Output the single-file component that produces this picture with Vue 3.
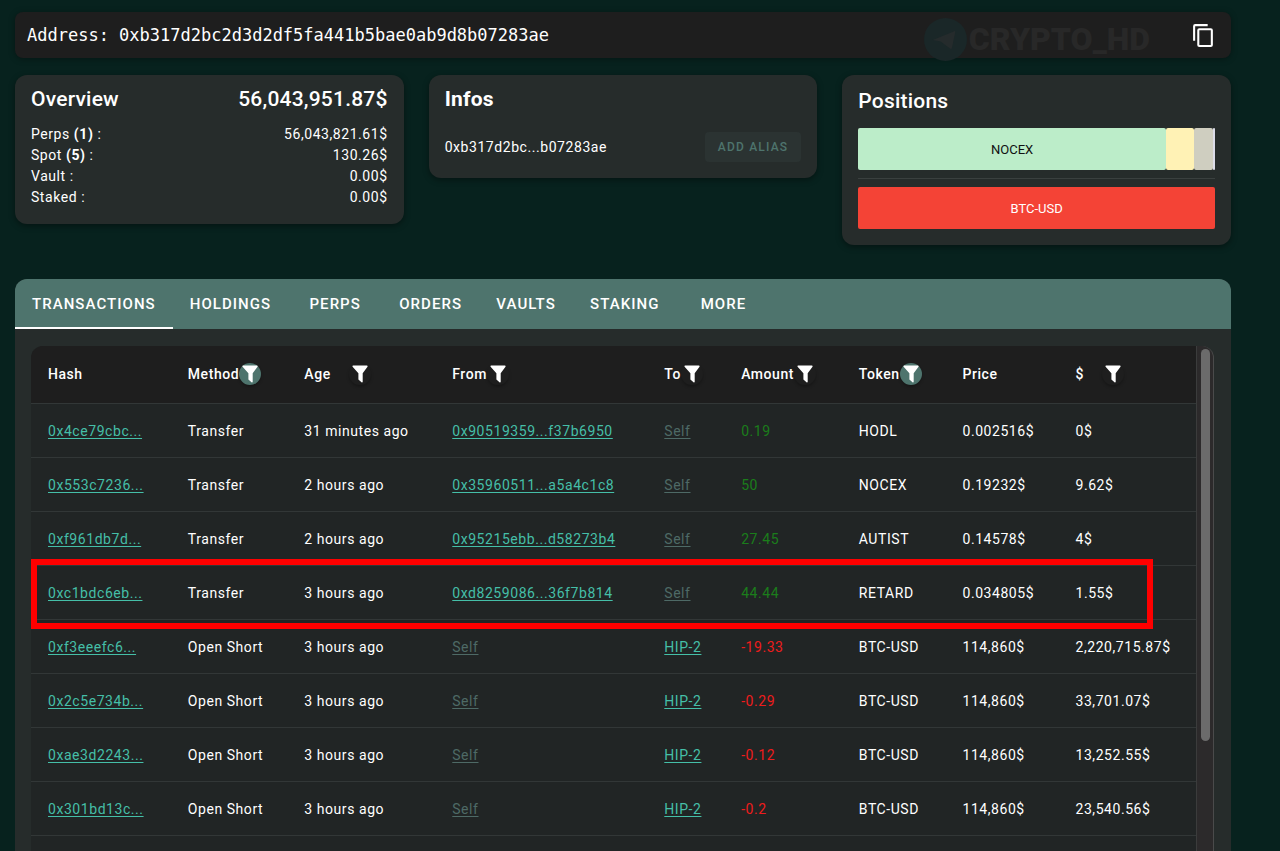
<script setup>
import { ref } from 'vue'

const tabs = ['Transactions', 'Holdings', 'Perps', 'Orders', 'Vaults', 'Staking', 'More']
const activeTab = ref('Transactions')

const balances = [
  { name: 'Perps', count: '(1)', value: '56,043,821.61$' },
  { name: 'Spot', count: '(5)', value: '130.26$' },
  { name: 'Vault', count: '', value: '0.00$' },
  { name: 'Staked', count: '', value: '0.00$' },
]

const columns = [
  { key: 'hash', label: 'Hash' },
  { key: 'method', label: 'Method', filter: true, active: true },
  { key: 'age', label: 'Age', filter: true, wide: true },
  { key: 'from', label: 'From', filter: true },
  { key: 'to', label: 'To', filter: true },
  { key: 'amount', label: 'Amount', filter: true },
  { key: 'token', label: 'Token', filter: true, active: true },
  { key: 'price', label: 'Price' },
  { key: 'total', label: '$', filter: true, wide: true },
]

const rows = [
  { hash: '0x4ce79cbc...', method: 'Transfer', age: '31 minutes ago', from: '0x90519359...f37b6950', to: 'Self', amount: '0.19', token: 'HODL', price: '0.002516$', total: '0$' },
  { hash: '0x553c7236...', method: 'Transfer', age: '2 hours ago', from: '0x35960511...a5a4c1c8', to: 'Self', amount: '50', token: 'NOCEX', price: '0.19232$', total: '9.62$' },
  { hash: '0xf961db7d...', method: 'Transfer', age: '2 hours ago', from: '0x95215ebb...d58273b4', to: 'Self', amount: '27.45', token: 'AUTIST', price: '0.14578$', total: '4$' },
  { hash: '0xc1bdc6eb...', method: 'Transfer', age: '3 hours ago', from: '0xd8259086...36f7b814', to: 'Self', amount: '44.44', token: 'RETARD', price: '0.034805$', total: '1.55$', marked: true },
  { hash: '0xf3eeefc6...', method: 'Open Short', age: '3 hours ago', from: 'Self', to: 'HIP-2', amount: '-19.33', token: 'BTC-USD', price: '114,860$', total: '2,220,715.87$' },
  { hash: '0x2c5e734b...', method: 'Open Short', age: '3 hours ago', from: 'Self', to: 'HIP-2', amount: '-0.29', token: 'BTC-USD', price: '114,860$', total: '33,701.07$' },
  { hash: '0xae3d2243...', method: 'Open Short', age: '3 hours ago', from: 'Self', to: 'HIP-2', amount: '-0.12', token: 'BTC-USD', price: '114,860$', total: '13,252.55$' },
  { hash: '0x301bd13c...', method: 'Open Short', age: '3 hours ago', from: 'Self', to: 'HIP-2', amount: '-0.2', token: 'BTC-USD', price: '114,860$', total: '23,540.56$' },
]

const linkKeys = ['hash', 'from', 'to']
</script>

<template>
  <main class="page">
    <header class="address">
      <span class="address-text">Address: 0xb317d2bc2d3d2df5fa441b5bae0ab9d8b07283ae</span>
      <span class="brand">
        <svg class="brand-icon" viewBox="0 0 44 44" aria-hidden="true">
          <circle cx="22" cy="22" r="22" fill="#1a2728" />
          <path d="M9 22.5 L31 13.5 Q32 13 32 14.5 L28.500 31 Q28 32 27 31.500 L17 24 Z" fill="#252b2c" />
        </svg>
        <span class="brand-name">CRYPTO_HD</span>
      </span>
      <button class="copy" type="button" aria-label="Copy address">
        <svg viewBox="0 0 24 24" aria-hidden="true">
          <path fill="#fff" d="M19,21H8V7H19M19,5H8A2,2 0 0,0 6,7V21A2,2 0 0,0 8,23H19A2,2 0 0,0 21,21V7A2,2 0 0,0 19,5M16,1H4A2,2 0 0,0 2,3V17H4V3H16V1Z" />
        </svg>
      </button>
    </header>

    <section class="cards">
      <article class="card">
        <div class="card-head">
          <h2>Overview</h2>
          <h2>56,043,951.87$</h2>
        </div>
        <dl class="balances">
          <div v-for="b in balances" :key="b.name">
            <dt>{{ b.name }} <b v-if="b.count">{{ b.count }}</b> :</dt>
            <dd>{{ b.value }}</dd>
          </div>
        </dl>
      </article>

      <article class="card">
        <h2 class="bold">Infos</h2>
        <div class="alias">
          <span>0xb317d2bc...b07283ae</span>
          <button type="button">ADD ALIAS</button>
        </div>
      </article>

      <article class="card positions">
        <h2>Positions</h2>
        <div class="bar">
          <span class="seg mint">NOCEX</span>
          <span class="seg cream"></span>
          <span class="seg stone"></span>
          <span class="seg pale"></span>
        </div>
        <hr />
        <div class="bar">
          <span class="seg red">BTC-USD</span>
        </div>
      </article>
    </section>

    <section class="panel">
      <nav class="tabs" role="tablist">
        <button
          v-for="t in tabs"
          :key="t"
          type="button"
          role="tab"
          :aria-selected="t === activeTab"
          :class="{ active: t === activeTab }"
          @click="activeTab = t"
        >{{ t }}</button>
      </nav>
      <div class="content">
        <div class="table-wrap">
          <table>
            <colgroup>
              <col v-for="c in columns" :key="c.key" :class="'col-' + c.key" />
            </colgroup>
            <thead>
              <tr>
                <th v-for="c in columns" :key="c.key" scope="col">
                  <div class="th">
                    <span>{{ c.label }}</span>
                    <button
                      v-if="c.filter"
                      type="button"
                      class="filter"
                      :class="{ on: c.active, wide: c.wide }"
                      :aria-label="'Filter ' + c.label"
                    >
                      <svg viewBox="0 0 16 18" aria-hidden="true">
                        <path fill="#fff" d="M1 0.5H15Q16 0.8 15.5 1.8L10.7 8.2V17Q10.3 17.7 9.5 17.2L6.4 14.6V8.2L0.6 1.8Q0 0.8 1 0.5Z" />
                      </svg>
                    </button>
                  </div>
                </th>
              </tr>
            </thead>
            <tbody>
              <tr v-for="r in rows" :key="r.hash">
                <td v-for="c in columns" :key="c.key">
                  <a v-if="linkKeys.includes(c.key)" href="#" :class="{ self: r[c.key] === 'Self' }">{{ r[c.key] }}</a>
                  <span v-else-if="c.key === 'amount'" :class="r.amount.startsWith('-') ? 'loss' : 'gain'">{{ r.amount }}</span>
                  <template v-else>{{ r[c.key] }}</template>
                  <span v-if="r.marked && c.key === 'hash'" class="marker"></span>
                </td>
              </tr>
            </tbody>
          </table>
        </div>
        <div class="track"><div class="thumb"></div></div>
      </div>
    </section>
  </main>
</template>

<style>
body {
  background: #07221e;
}
</style>

<style scoped>
.page {
  box-sizing: border-box;
  height: 100vh;
  overflow: hidden;
  display: flex;
  flex-direction: column;
  padding: 12px 49px 0 15px;
  background: #07221e;
  color: #fff;
  font-family: Roboto, "Liberation Sans", sans-serif;
  font-size: 14px;
  letter-spacing: 0.04em;
}
button {
  border: 0;
  padding: 0;
  background: none;
  color: inherit;
  font: inherit;
}
h2 {
  margin: 0;
  font-size: 21px;
  line-height: 32px;
  font-weight: 500;
  letter-spacing: 0.01em;
}
h2.bold {
  font-weight: 700;
}
.address {
  display: flex;
  align-items: center;
  height: 46px;
  padding: 0 15px 0 12px;
  border-radius: 8px;
  background: #1e1e1e;
  box-shadow: 0 1px 6px rgba(0, 0, 0, 0.35);
}
.address-text {
  flex: 1;
  font-family: "DejaVu Sans Mono", monospace;
  font-size: 17px;
  letter-spacing: 0;
}
.brand {
  display: flex;
  align-items: center;
  gap: 2px;
  margin: 8px 41px 0 0;
  color: #282828;
}
.brand-icon {
  width: 43px;
  height: 43px;
}
.brand-name {
  font-size: 32px;
  font-weight: 900;
  line-height: 38px;
  letter-spacing: 0;
}
.copy {
  width: 25px;
  height: 25px;
}
.copy svg {
  display: block;
  width: 25px;
  height: 25px;
}
.cards {
  display: grid;
  grid-template-columns: repeat(3, 1fr);
  align-items: start;
  gap: 25px;
  margin: 17px 0 34px;
}
.card {
  padding: 8px 16px 16px;
  border-radius: 12px;
  background: #262c2b;
  box-shadow: 0 2px 6px rgba(0, 0, 0, 0.4);
}
.card-head {
  display: flex;
  justify-content: space-between;
}
.balances {
  margin: 9px 0 0;
}
.balances div {
  display: flex;
  justify-content: space-between;
  line-height: 21px;
}
.balances dd {
  margin: 0;
}
.alias {
  display: flex;
  align-items: center;
  justify-content: space-between;
  margin-top: 17px;
}
.alias button {
  height: 30px;
  padding: 0 13px;
  border-radius: 4px;
  background: #2b3332;
  color: #4e746d;
  font-size: 12px;
  font-weight: 500;
  letter-spacing: 0.1em;
}
.positions {
  padding-top: 10px;
}
.bar {
  display: flex;
  height: 42px;
}
.positions h2 {
  margin-bottom: 11px;
}
.seg {
  display: flex;
  align-items: center;
  justify-content: center;
  border-radius: 2px;
  font-size: 13px;
  letter-spacing: 0;
}
.mint {
  flex: 307;
  background: #bcedc9;
  color: #111;
}
.cream {
  flex: 28;
  background: #fff2b5;
}
.stone {
  flex: 19;
  background: #cfcec0;
}
.pale {
  flex: 2;
  background: #dcdce8;
}
.red {
  flex: 1;
  background: #f44336;
}
hr {
  height: 1px;
  margin: 8px 0;
  border: 0;
  background: #3a403f;
}
.panel {
  flex: 1;
  min-height: 0;
  display: flex;
  flex-direction: column;
  border-radius: 12px 12px 0 0;
  overflow: hidden;
  background: #262c2b;
}
.tabs {
  display: flex;
  flex: none;
  height: 50px;
  background: #4e746d;
}
.tabs button {
  min-width: 94px;
  padding: 0 17px;
  border-top: 2px solid transparent;
  border-bottom: 2px solid transparent;
  font-weight: 500;
  font-size: 15px;
  letter-spacing: 0.07em;
  text-transform: uppercase;
}
.tabs .active {
  border-bottom-color: #fff;
}
.content {
  flex: 1;
  min-height: 0;
  display: flex;
  padding: 17px 17px 0 16px;
}
.table-wrap {
  flex: 1;
  overflow: hidden;
  border-radius: 12px 0 0 0;
  background: #212525;
}
table {
  width: 100%;
  table-layout: fixed;
  border-collapse: separate;
  border-spacing: 0;
}
.col-hash { width: 12%; }
.col-method { width: 10%; }
.col-age { width: 12.7%; }
.col-from { width: 18.2%; }
.col-to { width: 6.6%; }
.col-amount { width: 10.1%; }
.col-token { width: 8.9%; }
.col-price { width: 9.7%; }
.col-total { width: 11.8%; }
th,
td {
  box-sizing: border-box;
  padding: 0 0 0 17px;
  border-bottom: 1px solid #323737;
  text-align: left;
  white-space: nowrap;
}
th {
  height: 58px;
  padding-bottom: 2px;
  background: #1e1e1e;
  font-weight: 500;
}
td {
  height: 54px;
}
.th {
  display: flex;
  align-items: center;
}
.filter {
  display: flex;
  align-items: center;
  justify-content: center;
  width: 22px;
  height: 22px;
  border-radius: 50%;
  box-shadow: 0 2px 3px rgba(0, 0, 0, 0.25);
}
.filter svg {
  width: 16px;
  height: 18px;
}
.filter.on {
  background: #4e746d;
}
.filter.wide {
  margin-left: 18px;
}
a {
  color: #45bfa8;
  text-decoration: underline;
  text-underline-offset: 2px;
}
a.self {
  color: #4e6a66;
}
.gain {
  color: #1b7d1b;
}
.loss {
  color: #ee1c1c;
}
tbody tr {
  position: relative;
}
/* Frame drawn around the flagged transaction */
.marker {
  position: absolute;
  top: -7px;
  left: 0;
  right: 43px;
  bottom: -9px;
  border: 6px solid #f00;
  pointer-events: none;
}
.track {
  flex: none;
  box-sizing: border-box;
  width: 18px;
  padding: 3px 3px 0 4px;
  border-left: 1px solid #3b3c3c;
  border-right: 1px solid #4a4b4b;
  border-top-right-radius: 12px;
  background: #2c2a2b;
}
.thumb {
  height: 392px;
  border-radius: 5px;
  background: #6b6b6b;
}
</style>
